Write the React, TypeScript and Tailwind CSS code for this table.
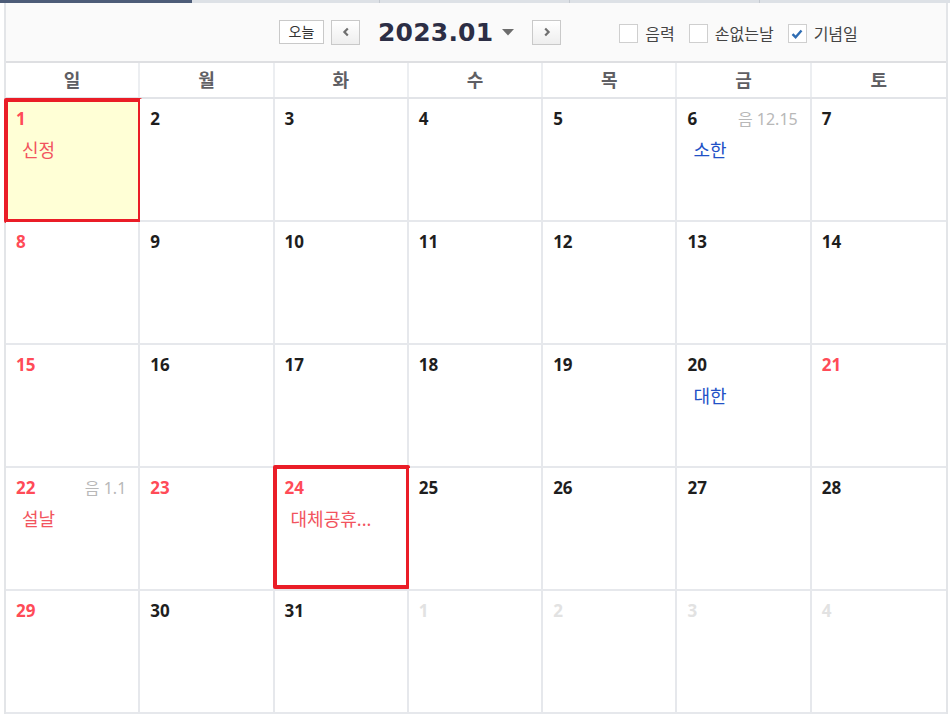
import React from "react";

type Day = {
  n: number;
  tone: "black" | "red" | "dim";
  lunar?: string;
  label?: string;
  labelTone?: "red" | "blue";
  mark?: "today" | "box";
};

const weekdays = ["일", "월", "화", "수", "목", "금", "토"];

const days: Day[] = [
  { n: 1, tone: "red", label: "신정", labelTone: "red", mark: "today" },
  { n: 2, tone: "black" },
  { n: 3, tone: "black" },
  { n: 4, tone: "black" },
  { n: 5, tone: "black" },
  { n: 6, tone: "black", lunar: "12.15", label: "소한", labelTone: "blue" },
  { n: 7, tone: "black" },
  { n: 8, tone: "red" },
  { n: 9, tone: "black" },
  { n: 10, tone: "black" },
  { n: 11, tone: "black" },
  { n: 12, tone: "black" },
  { n: 13, tone: "black" },
  { n: 14, tone: "black" },
  { n: 15, tone: "red" },
  { n: 16, tone: "black" },
  { n: 17, tone: "black" },
  { n: 18, tone: "black" },
  { n: 19, tone: "black" },
  { n: 20, tone: "black", label: "대한", labelTone: "blue" },
  { n: 21, tone: "red" },
  { n: 22, tone: "red", lunar: "1.1", label: "설날", labelTone: "red" },
  { n: 23, tone: "red" },
  { n: 24, tone: "red", label: "대체공휴...", labelTone: "red", mark: "box" },
  { n: 25, tone: "black" },
  { n: 26, tone: "black" },
  { n: 27, tone: "black" },
  { n: 28, tone: "black" },
  { n: 29, tone: "red" },
  { n: 30, tone: "black" },
  { n: 31, tone: "black" },
  { n: 1, tone: "dim" },
  { n: 2, tone: "dim" },
  { n: 3, tone: "dim" },
  { n: 4, tone: "dim" },
];

const toneClass = {
  black: "text-[#1e1e1e]",
  red: "text-[#ff4b57]",
  dim: "text-[#e2e2e2]",
};

const Check = ({ checked, label }: { checked?: boolean; label: string }) => (
  <div className="flex items-center gap-[7px]">
    <span className="w-[19px] h-[19px] border border-[#cfcfcf] bg-white flex items-center justify-center">
      {checked && (
        <svg width="12" height="10" viewBox="0 0 12 10">
          <path d="M1.5 5.2 L4.6 8.2 L10.5 1.5" fill="none" stroke="#2f6db3" strokeWidth="2.4" />
        </svg>
      )}
    </span>
    <span className="text-[16px] text-[#444]">{label}</span>
  </div>
);

const NavButton = ({ dir }: { dir: "l" | "r" }) => (
  <button className="w-[29px] h-[25px] border border-[#c9c9c9] bg-gradient-to-b from-white to-[#eeeeee] flex items-center justify-center">
    <svg width="8" height="10" viewBox="0 0 8 10">
      <path
        d={dir === "l" ? "M5.8 1.5 L2.4 5 L5.8 8.5" : "M2.2 1.5 L5.6 5 L2.2 8.5"}
        fill="none"
        stroke="#6f6f6f"
        strokeWidth="2.2"
      />
    </svg>
  </button>
);

const Cell = ({ d, last }: { d: Day; last: boolean }) => (
  <div
    className={
      "relative h-[123px] border-b-2 border-[#e6e8ec] " +
      (last ? "" : "border-r-2 ") +
      (d.mark === "today" ? "bg-[#ffffd6]" : "bg-white")
    }
  >
    <div className="flex items-start justify-between pl-[10px] pr-[12px] pt-[10px]">
      <span className={"text-[17px] font-bold leading-[20px] " + toneClass[d.tone]}>{d.n}</span>
      {d.lunar && (
        <span className="text-[16px] leading-[20px] text-[#b8b8b8]">
          음 {d.lunar}
        </span>
      )}
    </div>
    {d.label && (
      <div
        className={
          "pl-[16px] pt-[10px] text-[18px] leading-[23px] " +
          (d.labelTone === "blue" ? "text-[#2251c6]" : "text-[#f2545e]")
        }
      >
        {d.label}
      </div>
    )}
    {d.mark === "today" && (
      <div className="absolute left-[-2px] top-[-1px] right-[-4px] bottom-[-3px] border-4 border-[#ea1d27] rounded-[2px]" />
    )}
    {d.mark === "box" && (
      <div className="absolute left-[-2px] top-[-3px] right-[-3px] bottom-[0px] border-4 border-[#ea1d27] rounded-[2px]" />
    )}
  </div>
);

export default function App() {
  return (
    <div className="w-[950px] h-[717px] bg-white overflow-hidden font-['Noto_Sans','Noto_Sans_CJK_KR',sans-serif]">
      <div className="flex h-[3px]">
        <div className="w-[192px] bg-[#4d5c78]" />
        <div className="w-[187px] bg-[#dde1e6]" />
        <div className="w-[190px] bg-[#dde1e6] border-l border-[#c5cad1]" />
        <div className="w-[190px] bg-[#dde1e6] border-l border-[#c5cad1]" />
        <div className="flex-1 bg-[#dde1e6] border-l border-[#c5cad1]" />
      </div>
      <div className="ml-[4px] w-[944px] border-l-2 border-r-2 border-[#e3e5e8]">
        <div className="h-[60px] bg-[#fafafa] border-b-2 border-[#dedfe2] flex items-center pl-[273px]">
          <button className="w-[45px] h-[24px] border border-[#c9c9c9] bg-white text-[14px] text-[#333] leading-none">
            오늘
          </button>
          <div className="ml-[7px]">
            <NavButton dir="l" />
          </div>
          <span className="ml-[18px] font-['DejaVu_Sans',sans-serif] font-bold text-[25px] leading-none text-[#2c2e45] tracking-[0.2px]">
            2023.01
          </span>
          <svg className="ml-[9px]" width="12" height="7" viewBox="0 0 12 7">
            <path d="M0 0 H12 L6 6.5 Z" fill="#6d6d6d" />
          </svg>
          <div className="ml-[18px]">
            <NavButton dir="r" />
          </div>
          <div className="ml-[58px] flex items-center gap-[14px] pt-[3px]">
            <Check label="음력" />
            <Check label="손없는날" />
            <Check checked label="기념일" />
          </div>
        </div>
        <div className="grid grid-cols-7 h-[36px] border-b-2 border-[#e2e4e8] bg-white">
          {weekdays.map((w, i) => (
            <div
              key={w}
              className={
                "flex items-center justify-center text-[18px] font-bold text-[#5f5f64] " +
                (i < 6 ? "border-r-2 border-[#eceef1]" : "")
              }
            >
              {w}
            </div>
          ))}
        </div>
        <div className="grid grid-cols-7">
          {days.map((d, i) => (
            <Cell key={i} d={d} last={i % 7 === 6} />
          ))}
        </div>
      </div>
    </div>
  );
}
